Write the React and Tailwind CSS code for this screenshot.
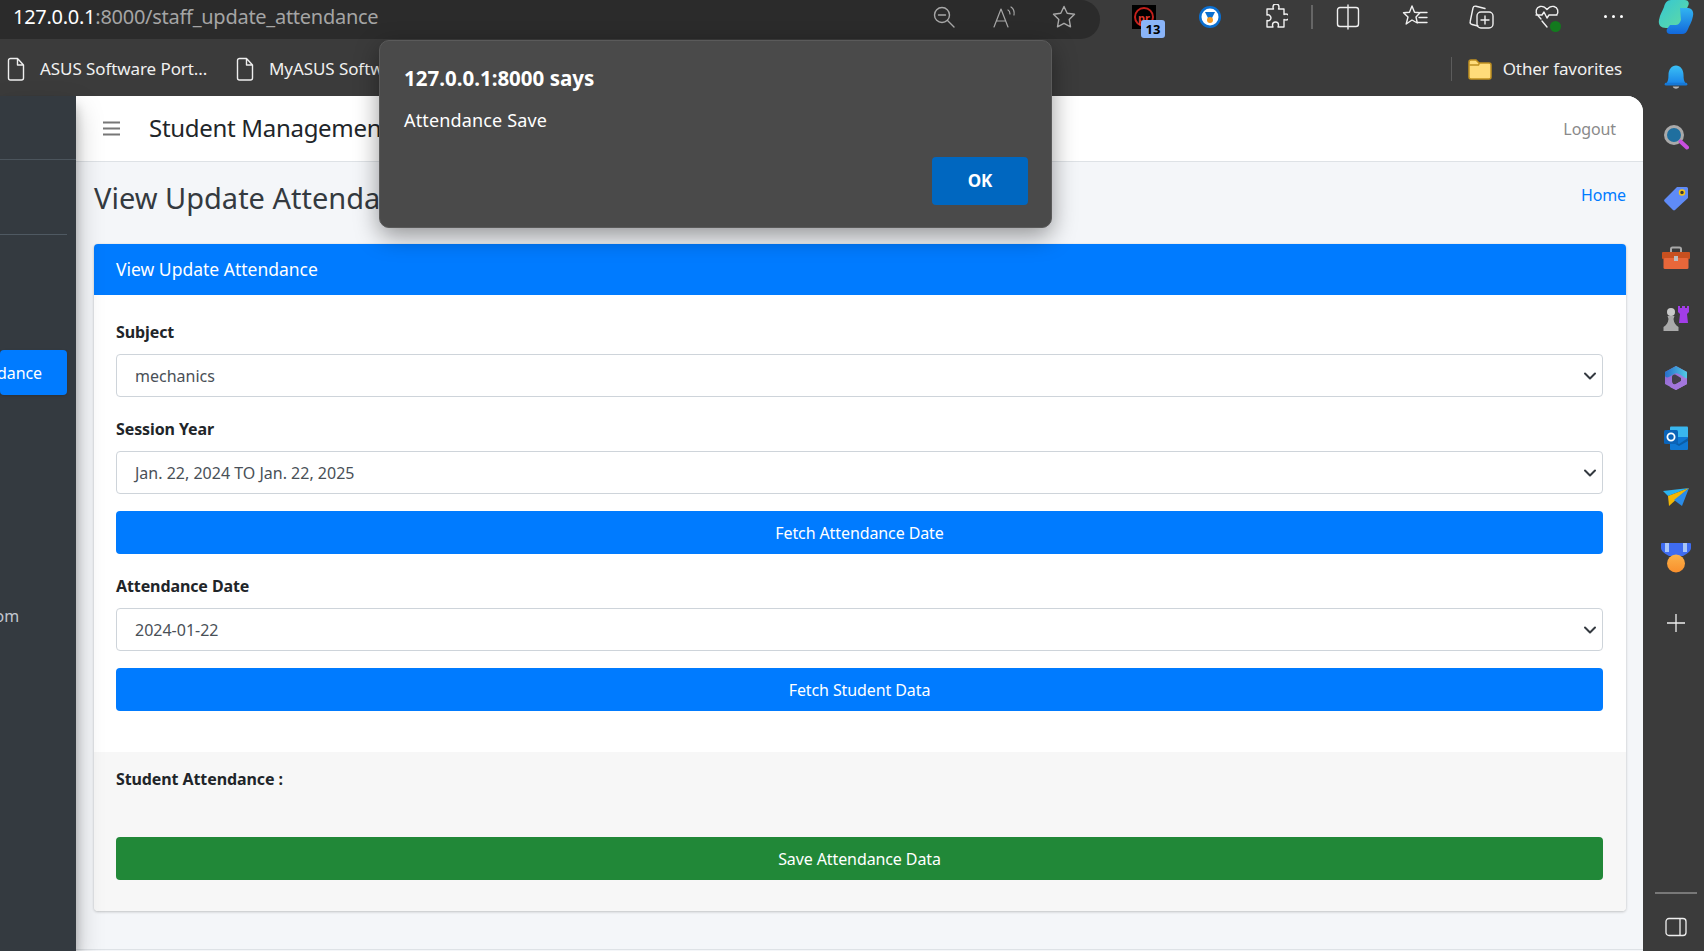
import React from "react";

const S = { stroke: "currentColor", fill: "none", strokeWidth: 1.4, strokeLinecap: "round", strokeLinejoin: "round" };

function Page16() {
  return (
    <svg width="20" height="24" viewBox="0 0 20 24" className="text-[#eeeeee] shrink-0">
      <path {...S} d="M2.5 3.5a2 2 0 0 1 2-2h7l6 6.5v13a2 2 0 0 1-2 2h-11a2 2 0 0 1-2-2z M11.5 1.5V8h6" />
    </svg>
  );
}

function Select({ children }) {
  return (
    <div className="flex items-center justify-between h-[43px] border border-[#ced4da] rounded bg-white pl-[18px] pr-[5px] text-[#495057] text-[16px]">
      <span>{children}</span>
      <svg width="14" height="14" viewBox="0 0 14 14" className="text-[#343a40]">
        <path d="M2 4.5 7 9.5 12 4.5" fill="none" stroke="currentColor" strokeWidth="2" strokeLinecap="round" strokeLinejoin="round" />
      </svg>
    </div>
  );
}

function Label({ children, className = "" }) {
  return <div className={`font-bold text-[#212529] text-[16px] tracking-[-0.1px] leading-[22px] ${className}`}>{children}</div>;
}

function Btn({ children, className = "" }) {
  return (
    <div className={`h-[43px] flex items-center justify-center rounded text-white text-[16px] tracking-[-0.1px] ${className}`}>{children}</div>
  );
}

function Rail() {
  return (
    <div className="w-[61px] shrink-0 bg-[#3b3b3b] flex flex-col items-center pl-[5px]">
      <div className="flex flex-col items-center h-[796px]">
        <div className="h-[58px] flex items-center -mt-[47px]">
          <svg width="26" height="28" viewBox="0 0 24 26">
            <defs><linearGradient id="bell" x1="0" y1="0" x2="0" y2="1"><stop offset="0" stopColor="#3bc0f5" /><stop offset="1" stopColor="#1a86e8" /></linearGradient></defs>
            <path d="M3 18c1.600-2 2-4 2-7.500C5 5 8 1.500 12 1.500s7 3.500 7 9c0 3.500.4 5.500 2 7.500z" fill="url(#bell)" />
            <rect x="1.500" y="17.500" width="21" height="2.500" rx="1.200" fill="#1678d6" />
            <path d="M9 21h6c-.5 2.500-5.500 2.500-6 0z" fill="#b5b5b5" />
          </svg>
        </div>
        <div className="h-[60px] flex items-center">
          <svg width="26" height="26" viewBox="0 0 26 26">
            <circle cx="11" cy="11" r="8.500" fill="#1f6f9f" stroke="#a9a9a9" strokeWidth="3" />
            <path d="M17.500 17.500 24 23.500" stroke="#c94fe0" strokeWidth="4" strokeLinecap="round" />
          </svg>
        </div>
        <div className="h-[61px] flex items-center">
          <svg width="26" height="26" viewBox="0 0 26 26">
            <path d="M1.500 14.500 14 2h9.500a1.500 1.500 0 0 1 1.500 1.500V13L12 25a1.500 1.500 0 0 1-2 0L1.500 16.500a1.500 1.500 0 0 1 0-2z" fill="#5f8bf7" />
            <circle cx="19" cy="7.500" r="2.500" fill="#3a3a3a" stroke="#f5c518" strokeWidth="1.500" />
          </svg>
        </div>
        <div className="h-[60px] flex items-center">
          <svg width="28" height="24" viewBox="0 0 28 24">
            <path d="M9 6V3a1.500 1.500 0 0 1 1.500-1.500h7A1.500 1.500 0 0 1 19 3v3" fill="none" stroke="#a9a9a9" strokeWidth="2" />
            <rect x="0" y="6" width="28" height="7" rx="1" fill="#c8501f" />
            <rect x="1.500" y="12" width="25" height="11" rx="1.500" fill="#e8673a" />
            <rect x="12" y="10" width="4" height="5" fill="#bdbdbd" />
          </svg>
        </div>
        <div className="h-[60px] flex items-center">
          <svg width="28" height="28" viewBox="0 0 28 28">
            <path d="M16 2h2v2h2V2h3v2h2V2h2v6l-2 2 1 9h-9l1-9-2-2z" fill="#a23de8" />
            <circle cx="9" cy="8" r="4" fill="#c9c9c9" />
            <path d="M5.500 12h7l-1 3c.5 4 2 6 5 8v4H1.500v-4c3-2 4.500-4 5-8z" fill="#a9a9a9" />
          </svg>
        </div>
        <div className="h-[60px] flex items-center">
          <svg width="24" height="26" viewBox="0 0 24 26">
            <defs>
              <linearGradient id="m1" x1="0" y1="0" x2="1" y2="1"><stop offset="0" stopColor="#8a5fd0" /><stop offset="1" stopColor="#b28be0" /></linearGradient>
              <linearGradient id="m2" x1="0" y1="0" x2="1" y2="0"><stop offset="0" stopColor="#1d6fc9" /><stop offset="1" stopColor="#49d2e6" /></linearGradient>
            </defs>
            <path d="M12 1 23 7v12l-11 6-11-6V7z" fill="url(#m1)" />
            <path d="M12 1 23 7v7l-8-5c-2-1-3-1-5 0L5 12c-2 1-4 .5-4-2V7z" fill="url(#m2)" opacity=".9" />
            <path d="M8 12c0-2 2-3 4-2l5 3v3l-5 3c-2 1-4 0-4-2z" fill="#3a3a3a" opacity=".9" />
            <path d="M8 16c0 3 2 4 4 3l11-6v6l-11 6-6-3c1.500-1 2-3 2-6z" fill="#a376dc" />
          </svg>
        </div>
        <div className="h-[60px] flex items-center">
          <svg width="24" height="24" viewBox="0 0 24 24">
            <rect x="6" y="0.500" width="18" height="12" rx="1" fill="#39b6ee" />
            <path d="M6 11h18v12a1 1 0 0 1-1 1H7a1 1 0 0 1-1-1z" fill="#0f78d4" />
            <path d="M6 12l9 6 9-6v3l-9 5-9-5z" fill="#0a5ea8" />
            <rect x="0" y="4" width="14" height="14" rx="1.500" fill="#0a63b8" />
            <circle cx="7" cy="11" r="3.600" fill="none" stroke="#ffffff" strokeWidth="1.800" />
          </svg>
        </div>
        <div className="h-[60px] flex items-center">
          <svg width="26" height="20" viewBox="0 0 26 20">
            <path d="M0 3 26 0 5 8z" fill="#2bb3f0" />
            <path d="M5 8 26 0 6 18z" fill="#f2b705" />
            <path d="M11 12 26 0 19 18z" fill="#2a8ce8" />
          </svg>
        </div>
        <div className="h-[60px] flex items-center">
          <svg width="30" height="30" viewBox="0 0 30 30">
            <defs><linearGradient id="med" x1="0" y1="0" x2="0" y2="1"><stop offset="0" stopColor="#fbb24a" /><stop offset="1" stopColor="#f98f2c" /></linearGradient></defs>
            <path d="M0 1a1 1 0 0 1 1-1h28a1 1 0 0 1 1 1v4c0 3-3 5-8 8H8C3 10 0 8 0 5z" fill="#3f6cf0" />
            <rect x="4" y="0" width="4" height="9" fill="#a9c6f7" />
            <rect x="22" y="0" width="4" height="9" fill="#a9c6f7" />
            <circle cx="15" cy="20.500" r="9" fill="url(#med)" />
          </svg>
        </div>
        <div className="h-[70px] flex items-center">
          <svg width="20" height="20" viewBox="0 0 20 20" className="text-[#eeeeee]">
            <path d="M10 1v18M1 10h18" stroke="currentColor" strokeWidth="1.300" />
          </svg>
        </div>
      </div>
      <div className="w-[42px] h-[2px] bg-[#787878]" />
      <svg width="22" height="20" viewBox="0 0 22 20" className="text-[#eeeeee] mt-[23px]">
        <rect x="1" y="1.500" width="20" height="17" rx="3" fill="none" stroke="currentColor" strokeWidth="1.300" />
        <path d="M15 1.500v17" stroke="currentColor" strokeWidth="1.300" />
      </svg>
    </div>
  );
}

export default function App() {
  return (
    <div className="relative w-[1704px] h-[951px] overflow-hidden bg-[#3b3b3b] font-['Noto_Sans','Open_Sans',sans-serif]">
      {/* tab / address row */}
      <div className="flex h-[39px] bg-[#3b3b3b]">
        <div className="w-[1100px] shrink-0 bg-[#2b2b2b] rounded-r-[20px] flex items-center pl-[13px] pb-[6px] text-[20px] tracking-[-0.27px] whitespace-nowrap">
          <span className="text-white">127.0.0.1</span>
          <span className="text-[#a5a5a5]">:8000/staff_update_attendance</span>
          <div className="ml-auto mr-[24px] flex items-center gap-[36px] text-[#a8a8a8]">
            <svg width="24" height="24" viewBox="0 0 24 24">
              <circle cx="10" cy="10" r="7.500" {...S} />
              <path {...S} d="M6.500 10h7M15.500 15.500 22 22" />
            </svg>
            <svg width="24" height="24" viewBox="0 0 24 24">
              <path {...S} strokeWidth="1.200" d="M2 22 9 4l7 18M4.500 16h9M16 5c2 1 2 3 2 4M19 2c3 2 3.500 5 3 8" />
            </svg>
            <svg width="24" height="24" viewBox="0 0 24 24">
              <path {...S} d="m12 1.500 3.200 6.800 7.300 1-5.300 5.100 1.300 7.400L12 18.300 5.500 21.800l1.300-7.400L1.500 9.300l7.300-1z" />
            </svg>
          </div>
        </div>
        <div className="flex items-center text-[#f0f0f0] pb-[6px]">
          <div className="relative w-[33px] h-[36px] ml-[32px] mt-[5px]">
            <div className="w-[24px] h-[24px] bg-black flex items-center justify-center mt-[4px]">
              <div className="w-[20px] h-[20px] rounded-full border-2 border-[#c4201c] flex items-center justify-center text-[#e33a2c] font-bold text-[11px] leading-none">pr</div>
            </div>
            <div className="absolute left-[9px] top-[19px] w-[24px] h-[18px] rounded-[3px] bg-[#8ab4f8] text-black text-[13px] font-bold leading-[18px] tracking-normal text-center">13</div>
          </div>
          <svg width="24" height="24" viewBox="0 0 24 24" className="ml-[33px]">
            <circle cx="12" cy="12" r="11" fill="#0b6fd0" />
            <circle cx="12" cy="12" r="8.500" fill="#ffffff" />
            <path d="M7 7h10l-3 6h-4z" fill="#0b6fd0" />
            <circle cx="12" cy="15" r="3" fill="#f59a23" />
          </svg>
          <svg width="24" height="26" viewBox="0 0 24 26" className="ml-[42px]">
            <path {...S} d="M9 3a3 3 0 0 1 6 0c0 1-.3 1.500-.5 2h5.500v5.500c.5-.2 1-.5 2-.5a3 3 0 0 1 0 6c-1 0-1.500-.3-2-.5V23h-6c.2-.5.5-1.200.5-2a3 3 0 0 0-6 0c0 .8.3 1.500.5 2H3v-6.500c1 .5 2 .5 3-.5a3 3 0 0 0-3-5V5h6.500C9.300 4.500 9 4 9 3z" />
          </svg>
          <div className="ml-[23px] w-[2px] h-[24px] bg-[#666666]" />
          <svg width="24" height="26" viewBox="0 0 24 26" className="ml-[23px]">
            <path {...S} d="M11 3.500H4a2.500 2.500 0 0 0-2.500 2.500v14A2.500 2.500 0 0 0 4 22.500h7M13 3.500h7A2.500 2.500 0 0 1 22.500 6v14a2.500 2.500 0 0 1-2.500 2.500h-7M12 1v24" />
          </svg>
          <svg width="26" height="26" viewBox="0 0 26 26" className="ml-[42px]">
            <path {...S} d="M10 2l2.500 6.200 5.500.6-4 4.200 1.300 6-5.300-3-5.800 4 1.800-7L1.500 8.800l6-.6zM18 8.500h7M17 13.500h8M16 18.500h9" />
          </svg>
          <svg width="28" height="28" viewBox="0 0 28 28" className="ml-[39px]">
            <path {...S} d="M11 23 5 21.500a2.500 2.500 0 0 1-1.800-3L6 5a2.500 2.500 0 0 1 3-1.800l9 2.300" />
            <rect x="10" y="9" width="16" height="16" rx="4" {...S} />
            <path {...S} d="M18 13v8M14 17h8" />
          </svg>
          <div className="relative ml-[39px] w-[26px] h-[26px]">
            <svg width="26" height="26" viewBox="0 0 26 26">
              <path {...S} d="M7 15 3.500 11C1 8 2 3.500 6 2.500c2.500-.5 5 .5 7 3 2-2.500 4.500-3.500 7-3 4 1 5 5.500 2.500 8.500M2 11h6l2-3 3 6 2-3h8M8 17l5 6" />
            </svg>
            <div className="absolute right-[-1px] bottom-[-2px] w-[11px] h-[11px] rounded-full bg-[#137a1e]" />
          </div>
          <div className="ml-[44px] w-[19px] flex justify-between">
            <div className="w-[3px] h-[3px] rounded-full bg-white" />
            <div className="w-[3px] h-[3px] rounded-full bg-white" />
            <div className="w-[3px] h-[3px] rounded-full bg-white" />
          </div>
          <svg width="36" height="36" viewBox="0 0 36 36" className="ml-[35px]">
            <defs>
              <linearGradient id="cp1" x1="0" y1="0" x2="1" y2="1"><stop offset="0" stopColor="#35c6d4" /><stop offset="1" stopColor="#62dca0" /></linearGradient>
              <linearGradient id="cp2" x1="0" y1="0" x2="0" y2="1"><stop offset="0" stopColor="#32b4f0" /><stop offset="1" stopColor="#1268dc" /></linearGradient>
            </defs>
            <path d="M13 1h14c3 0 5 3 3 6l-9 22H8c-5 0-8-3-7-8 1-6 4-10 5-13 1-4 3-7 7-7z" fill="url(#cp1)" />
            <path d="M22 9h8c4 0 6 4 5 8-1 6-4 10-5 13-1 3-3 5-6 5H12c-3 0-4-3-3-5l3-4h6c3 0 4-3 5-5z" fill="url(#cp2)" />
          </svg>
        </div>
      </div>

      {/* favourites row */}
      <div className="flex items-center h-[57px] bg-[#3b3b3b] text-[#f0f0f0] text-[17px] tracking-[-0.08px] whitespace-nowrap pl-[6px] pt-[3px]">
        <Page16 />
        <span className="ml-[14px] w-[169px]">ASUS Software Port...</span>
        <div className="ml-[26px]"><Page16 /></div>
        <span className="ml-[14px]">MyASUS Software</span>
        <div className="ml-auto flex items-center pr-[82px]">
          <div className="w-px h-[24px] bg-[#5c5c5c] mr-[16px]" />
          <svg width="24" height="24" viewBox="0 0 24 24">
            <path d="M1 5a2 2 0 0 1 2-2h5l3 3h10a2 2 0 0 1 2 2v12a2 2 0 0 1-2 2H3a2 2 0 0 1-2-2z" fill="#ffdc7a" stroke="#c09020" strokeWidth="1.500" />
            <path d="M1.500 8h9l1-2" fill="none" stroke="#c09020" strokeWidth="1.500" />
          </svg>
          <span className="ml-[11px]">Other favorites</span>
        </div>
      </div>

      {/* browser content */}
      <div className="flex h-[855px]">
        <aside className="relative z-10 w-[76px] shrink-0 bg-[#343a40] text-[#c2c7d0] text-[16px] tracking-[-0.1px] shadow-[0_14px_28px_rgba(0,0,0,0.25),0_10px_10px_rgba(0,0,0,0.22)] overflow-hidden whitespace-nowrap">
          <div className="h-[64px] border-b border-[#4b545c]" />
          <div className="h-[75px] mr-[9px] border-b border-[#4f5962]" />
          <div className="mt-[115px] h-[45px] w-[67px] bg-[#007bff] text-white rounded flex items-center justify-end pr-[25px] shadow-sm">
            <span>View Update Attendance</span>
          </div>
          <div className="mt-[209px] w-[67px] flex justify-end pr-[48px] h-[24px] items-center">
            <span>Classroom</span>
          </div>
        </aside>

        <main className="flex-1 min-w-0 bg-[#f4f6f9] rounded-tr-[16px] overflow-hidden flex flex-col">
          <nav className="h-[66px] bg-white border-b border-[#dee2e6] flex items-center pl-[27px] pr-[27px] shrink-0">
            <svg width="17" height="15" viewBox="0 0 17 15" className="text-[#777777]">
              <path d="M0 1.500h17M0 7.500h17M0 13.500h17" stroke="currentColor" strokeWidth="2.200" />
            </svg>
            <span className="ml-[29px] text-[#212529] text-[24px] tracking-[-0.3px] whitespace-nowrap -mt-[2px]">Student Management System</span>
            <span className="ml-auto text-[#8a8a8a] text-[16px] tracking-[-0.1px] mt-[1px]">Logout</span>
          </nav>

          <div className="flex items-center justify-between h-[82px] pl-[18px] pr-[17px] shrink-0">
            <h1 className="text-[#343a40] text-[29px] whitespace-nowrap -mt-[10px]">View Update Attendance</h1>
            <a className="text-[#007bff] text-[16px] tracking-[-0.1px] -mt-[16px]">Home</a>
          </div>

          <section className="ml-[18px] mr-[17px] rounded bg-white shadow-[0_0_1px_rgba(0,0,0,0.13),0_1px_3px_rgba(0,0,0,0.2)] flex flex-col text-[16px] shrink-0">
            <div className="h-[51px] bg-[#007bff] rounded-t flex items-center pl-[22px] text-white text-[17.500px]">View Update Attendance</div>
            <div className="h-[457px] pl-[22px] pr-[23px] pt-[26px]">
              <Label className="mb-[11px]">Subject</Label>
              <Select>mechanics</Select>
              <Label className="mt-[21px] mb-[11px]">Session Year</Label>
              <Select>Jan. 22, 2024 TO Jan. 22, 2025</Select>
              <Btn className="mt-[17px] bg-[#007bff]">Fetch Attendance Date</Btn>
              <Label className="mt-[21px] mb-[11px]">Attendance Date</Label>
              <Select>2024-01-22</Select>
              <Btn className="mt-[17px] bg-[#007bff]">Fetch Student Data</Btn>
            </div>
            <div className="h-[159px] bg-[#f7f7f7] rounded-b pl-[22px] pr-[23px] pt-[16px]">
              <Label>Student Attendance :</Label>
              <Btn className="mt-[47px] bg-[#218838]">Save Attendance Data</Btn>
            </div>
          </section>

          <div className="mt-auto mb-[1px] h-px bg-[#dee2e6]" />
        </main>

        <Rail />
      </div>

      {/* JS alert */}
      <div className="absolute left-[379px] top-[40px] w-[673px] h-[188px] rounded-[10px] bg-[#4a4a4a] border border-[#5a5a5a] shadow-[0_8px_24px_rgba(0,0,0,0.4)] z-20 pl-[24px] pr-[24px] pt-[24px] text-white flex flex-col">
        <div className="text-[20.500px] font-bold leading-[26px]">127.0.0.1:8000 says</div>
        <div className="mt-[16px] text-[18px] tracking-[0.15px] leading-[26px]">Attendance Save</div>
        <div className="mt-auto mb-[22px] self-end mr-[-1px] w-[96px] h-[48px] rounded-[4px] bg-[#0067c0] flex items-center justify-center font-bold text-[17px]">OK</div>
      </div>
    </div>
  );
}
